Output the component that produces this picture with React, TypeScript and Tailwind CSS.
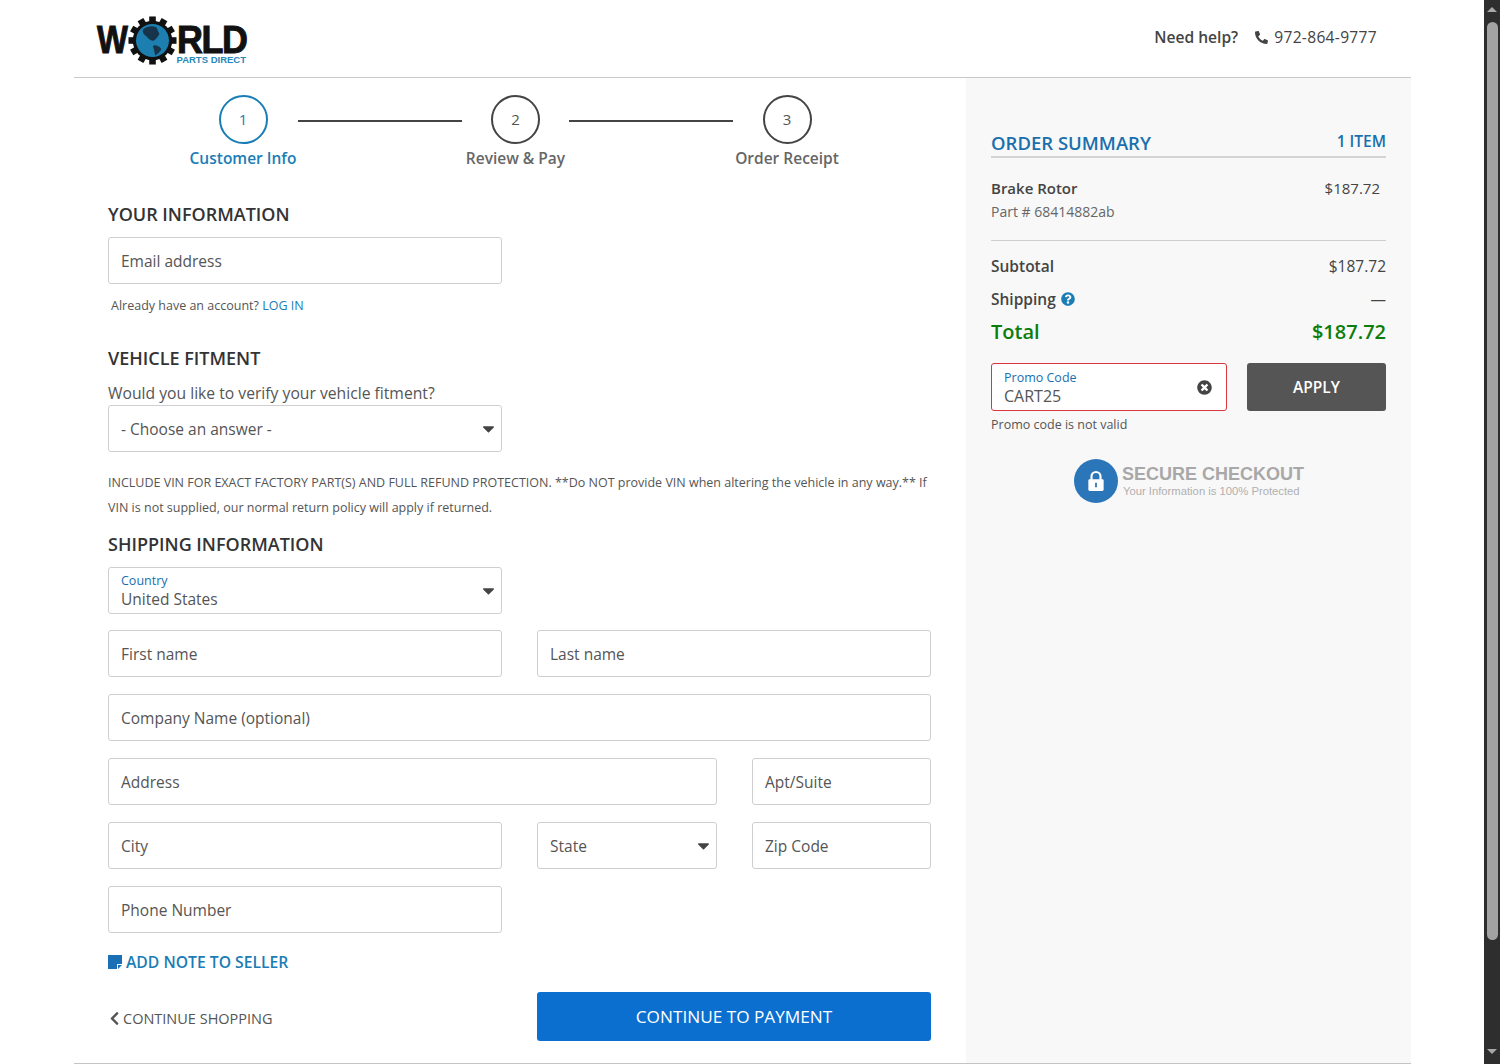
import { FaCaretDown, FaChevronLeft, FaPhone, FaQuestionCircle, FaTimesCircle } from 'react-icons/fa';

const steps = [
  { n: 1, label: 'Customer Info', active: true, width: 'w-[110px]' },
  { n: 2, label: 'Review & Pay', active: false, width: 'w-[107px]' },
  { n: 3, label: 'Order Receipt', active: false, width: 'w-[108px]' },
];

const Gear = () => {
  const teeth = Array.from({ length: 12 }, (_, i) => i * 30);
  return (
    <svg viewBox="0 0 52 52" className="h-[49px] w-[49px] shrink-0">
      {teeth.map((deg) => (
        <rect key={deg} x="22.5" y="0.5" width="7" height="8" fill="#111" transform={`rotate(${deg} 26 26)`} />
      ))}
      <circle cx="26" cy="26" r="21" fill="#111" />
      <circle cx="26" cy="26" r="17.5" fill="#1c7fb0" />
      <path d="M16 14c4-3 10-4 14-2 2 2 1 4 3 6 1 2-2 4-3 6-2 2-3 3-5 2-3-1-4-3-6-5-2-1-4-4-3-7z" fill="#17354a" />
      <path d="M28 31c3 0 7 2 7 4 0 3-4 5-6 7-1-3-1-6-2-8-1-2 0-3 1-3z" fill="#17354a" />
    </svg>
  );
};

const Logo = () => (
  <div className="relative flex h-[52px] w-[151px] items-center font-['Liberation_Sans',sans-serif] text-[39px] leading-[28px] font-bold tracking-[-1.5px] text-[#111] [-webkit-text-stroke:1px_#111]">
    <span className="w-[31px] origin-left scale-x-[0.84]">W</span>
    <Gear />
    <span className="w-[71px] origin-left scale-x-[0.92]">RLD</span>
    <span className="absolute top-[40px] right-[2px] text-[9.5px] leading-3 font-bold tracking-normal text-[#2787b8] [-webkit-text-stroke:0]">
      PARTS DIRECT
    </span>
  </div>
);

const Field = ({ placeholder, className = '' }: { placeholder: string; className?: string }) => (
  <div className={`flex h-[47px] items-center rounded-[3px] border border-[#cfcfcf] bg-white pt-[2px] pl-3 text-[15.5px] text-[#555] ${className}`}>
    {placeholder}
  </div>
);

const SelectField = ({ label, value, className = '' }: { label?: string; value: string; className?: string }) => (
  <div className={`flex h-[47px] items-center justify-between rounded-[3px] border border-[#cfcfcf] bg-white pr-[3px] pl-3 ${className}`}>
    <div className={`flex flex-col text-[15.5px] text-[#555] ${label ? 'pt-[2px]' : 'pt-[3px]'}`}>
      {label && <span className="text-[12.5px] leading-[14px] text-[#1a6fae]">{label}</span>}
      <span className={label ? 'leading-[22px]' : ''}>{value}</span>
    </div>
    <FaCaretDown className="text-[19px] text-[#444]" />
  </div>
);

const SectionTitle = ({ children, className = '' }: { children: string; className?: string }) => (
  <h2 className={`text-lg leading-6 font-semibold text-[#333] ${className}`}>{children}</h2>
);

const Scrollbar = () => (
  <div className="flex h-[1064px] w-4 shrink-0 flex-col items-center bg-[#2e2e2e]">
    <div className="mt-[7px] h-0 w-0 border-x-[5px] border-b-[5px] border-x-transparent border-b-[#a8a8a8]" />
    <div className="mt-[10px] h-[918px] w-[11px] rounded-full bg-[#a3a3a3]" />
    <div className="mt-[109px] h-0 w-0 border-x-[5px] border-t-[5px] border-x-transparent border-t-[#a8a8a8]" />
  </div>
);

export default function App() {
  return (
    <div className="flex h-[1064px] overflow-hidden bg-white font-['Open_Sans',sans-serif] text-[#444]">
      <div className="min-w-0 flex-1 pl-[74px]">
        <div className="flex h-[1064px] w-[1337px] flex-col border-b border-[#c4c4c4]">
          {/* Header */}
          <header className="flex h-[78px] shrink-0 items-start justify-between border-b border-[#c8c8c8] pt-[14px] pr-[34px] pl-[23px]">
            <Logo />
            <div className="mt-[12px] flex items-center text-[15.6px] font-semibold text-[#444]">
              <span>Need help?</span>
              <FaPhone className="mr-[6px] ml-[17px] -scale-x-100 text-[13px]" />
              <span className="font-normal tracking-[0.3px]">972-864-9777</span>
            </div>
          </header>

          <div className="flex min-h-0 flex-1">
            {/* Checkout form */}
            <main className="w-[892px] shrink-0 pt-[17px] pl-[34px]">
              <div className="ml-[80px] flex">
                {steps.map((step, i) => (
                  <div key={step.n} className="flex">
                    <div className={`flex flex-col items-center whitespace-nowrap ${step.width} ${step.active ? 'text-[#1a7db5]' : 'text-[#555]'}`}>
                      <div className={`flex h-[49px] w-[49px] items-center justify-center rounded-full border-2 text-[15px] font-medium ${step.active ? 'border-[#1a7db5]' : 'border-[#444]'}`}>
                        {step.n}
                      </div>
                      <span className={`mt-[2px] text-[15.5px] leading-6 font-semibold ${step.active ? '' : 'text-[#666]'}`}>{step.label}</span>
                    </div>
                    {i < 2 && <div className="mt-[25px] h-[2px] w-[164px] bg-[#444]" />}
                  </div>
                ))}
              </div>

              <SectionTitle className="mt-[32px]">YOUR INFORMATION</SectionTitle>
              <Field placeholder="Email address" className="mt-[11px] w-[394px]" />
              <p className="mt-[14px] ml-[3px] text-[12.5px] leading-[16px] text-[#555]">
                Already have an account? <span className="font-medium text-[#1a7db5]">LOG IN</span>
              </p>

              <SectionTitle className="mt-[32px]">VEHICLE FITMENT</SectionTitle>
              <p className="mt-[11px] text-[15.7px] leading-6 text-[#555]">Would you like to verify your vehicle fitment?</p>
              <SelectField value="- Choose an answer -" className="w-[394px]" />
              <p className="mt-[18px] w-[823px] text-[12.5px] leading-[25px] text-[#555]">
                INCLUDE VIN FOR EXACT FACTORY PART(S) AND FULL REFUND PROTECTION. **Do NOT provide VIN when altering the vehicle in any way.** If VIN is not supplied, our normal return policy will apply if returned.
              </p>

              <SectionTitle className="mt-[12px]">SHIPPING INFORMATION</SectionTitle>
              <SelectField label="Country" value="United States" className="mt-[11px] w-[394px]" />

              <div className="mt-[16px] flex w-[823px] flex-col gap-[17px]">
                <div className="grid grid-cols-2 gap-[35px]">
                  <Field placeholder="First name" />
                  <Field placeholder="Last name" />
                </div>
                <Field placeholder="Company Name (optional)" />
                <div className="flex gap-[35px]">
                  <Field placeholder="Address" className="flex-1" />
                  <Field placeholder="Apt/Suite" className="w-[179px]" />
                </div>
                <div className="flex gap-[35px]">
                  <Field placeholder="City" className="w-[394px]" />
                  <SelectField value="State" className="w-[180px]" />
                  <Field placeholder="Zip Code" className="w-[179px]" />
                </div>
                <Field placeholder="Phone Number" className="w-[394px]" />
              </div>

              <div className="mt-[17px] flex items-center text-[15.7px] leading-6 font-semibold text-[#1a7db5]">
                <svg viewBox="0 0 14 14" className="mr-[4px] h-[14px] w-[14px]">
                  <path d="M0 0h14v9h-5v5H0z" fill="#1a6fb5" />
                  <path d="M10 10h4l-4 4z" fill="#1a6fb5" />
                </svg>
                ADD NOTE TO SELLER
              </div>

              <div className="mt-[18px] flex w-[823px] items-center justify-between">
                <div className="flex items-center pt-[4px] text-[14.5px] font-medium text-[#555]">
                  <FaChevronLeft className="mr-[1px] -ml-[1px] text-[15px]" />
                  CONTINUE SHOPPING
                </div>
                <button className="h-[49px] w-[394px] rounded-[3px] bg-[#0b6fd0] text-[17.2px] text-white">CONTINUE TO PAYMENT</button>
              </div>
            </main>

            {/* Order summary */}
            <aside className="flex-1 bg-[#f8f8f8] px-[25px] pt-[51px]">
              <div className="flex items-end justify-between border-b-2 border-[#d4d4d4] pb-[1px] font-semibold text-[#1a6fae]">
                <span className="text-[18.5px] leading-6">ORDER SUMMARY</span>
                <span className="mb-[2px] text-[15.5px] leading-6">1 ITEM</span>
              </div>
              <div className="border-b border-[#cfcfcf] pt-[18px] pb-[16px]">
                <div className="flex justify-between pr-[6px] text-[15px] leading-6 font-semibold text-[#444]">
                  <span>Brake Rotor</span>
                  <span className="font-medium">$187.72</span>
                </div>
                <p className="text-sm leading-6 text-[#666]">Part # 68414882ab</p>
              </div>
              <div className="mt-[13px] flex justify-between text-[15.5px] leading-6 font-semibold">
                <span>Subtotal</span>
                <span className="font-medium">$187.72</span>
              </div>
              <div className="mt-[9px] flex items-center justify-between text-[15.5px] leading-6 font-semibold">
                <span className="flex items-center gap-[5px]">
                  Shipping <FaQuestionCircle className="text-sm text-[#1a7db5]" />
                </span>
                <span className="font-normal">—</span>
              </div>
              <div className="mt-[7px] flex justify-between text-xl leading-7 font-semibold text-[#0b7d0b]">
                <span>Total</span>
                <span>$187.72</span>
              </div>
              <div className="mt-[17px] flex justify-between">
                <div className="flex h-[48px] w-[236px] items-center justify-between rounded-[3px] border border-[#d9363e] bg-white pr-[14px] pl-3">
                  <div className="flex flex-col pt-[3px] text-[#555]">
                    <span className="text-[12.5px] leading-[14px] text-[#1a6fae]">Promo Code</span>
                    <span className="text-base leading-[22px]">CART25</span>
                  </div>
                  <FaTimesCircle className="text-[15px] text-[#444]" />
                </div>
                <button className="h-[48px] w-[139px] rounded-[3px] bg-[#555] pt-[2px] text-[15.5px] font-semibold text-white">APPLY</button>
              </div>
              <p className="mt-[6px] text-[12.5px] leading-[16px] text-[#555]">Promo code is not valid</p>

              <div className="mt-[26px] ml-[83px] flex items-center">
                <div className="flex h-[44px] w-[44px] items-center justify-center rounded-full bg-[#2b76b9]">
                  <svg viewBox="0 0 20 24" className="h-[22px] w-[18px]">
                    <path d="M5 11V7a5 5 0 0 1 10 0v4" fill="none" stroke="#fff" strokeWidth="2.4" />
                    <rect x="1.5" y="10" width="17" height="13" rx="1.5" fill="#fff" />
                    <rect x="9" y="14" width="2" height="5" fill="#2b76b9" />
                  </svg>
                </div>
                <div className="ml-1 font-['Liberation_Sans',sans-serif] text-[#b0b0b0]">
                  <div className="text-[18px] leading-[20px] font-bold text-[#a8a8a8]">SECURE CHECKOUT</div>
                  <div className="ml-[1px] text-[11.25px] leading-[14px]">Your Information is 100% Protected</div>
                </div>
              </div>
            </aside>
          </div>
        </div>
      </div>
      <Scrollbar />
    </div>
  );
}
